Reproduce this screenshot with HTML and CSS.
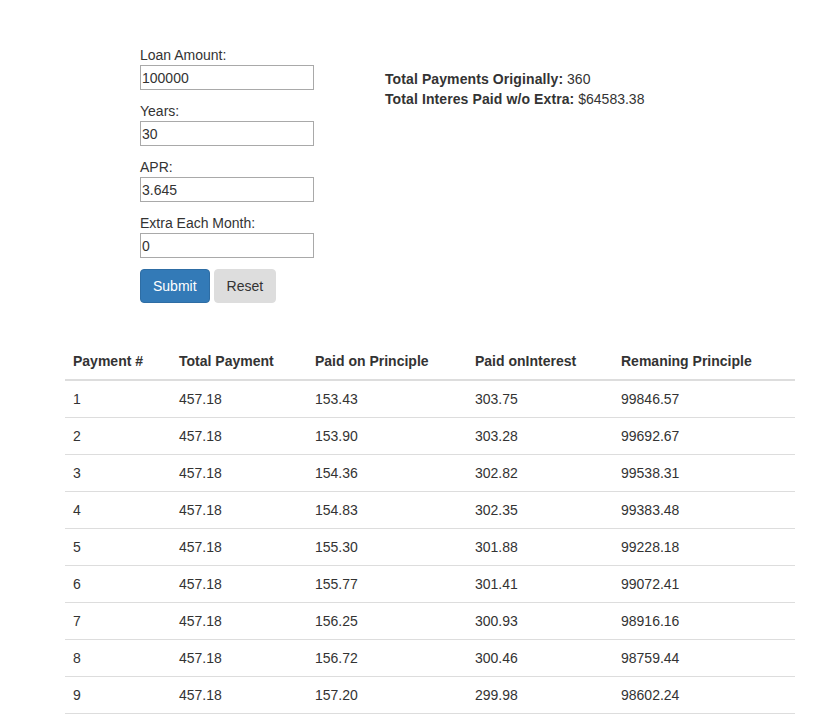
FILE: index.html
```html
<!DOCTYPE html>
<html>
<head>
<meta charset="utf-8">
<title>Mortgage Calculator</title>
<link rel="stylesheet" href="styles.css">
</head>
<body>
<div class="top">
  <form class="loan-form">
    <div class="group">
      <label class="lbl">Loan Amount:</label>
      <input class="field" type="text" value="100000">
    </div>
    <div class="group">
      <label class="lbl">Years:</label>
      <input class="field" type="text" value="30">
    </div>
    <div class="group">
      <label class="lbl">APR:</label>
      <input class="field" type="text" value="3.645">
    </div>
    <div class="group">
      <label class="lbl">Extra Each Month:</label>
      <input class="field" type="text" value="0">
    </div>
    <div class="actions">
      <button type="button" class="btn btn-primary">Submit</button>
      <button type="button" class="btn btn-default">Reset</button>
    </div>
  </form>
  <div class="summary">
    <div><strong>Total Payments Originally:</strong> 360</div>
    <div><strong>Total Interes Paid w/o Extra:</strong> $64583.38</div>
  </div>
</div>
<table class="sched">
  <colgroup>
    <col class="c1"><col class="c2"><col class="c3"><col class="c4"><col class="c5">
  </colgroup>
  <thead>
    <tr><th>Payment #</th><th>Total Payment</th><th>Paid on Principle</th><th>Paid onInterest</th><th>Remaning Principle</th></tr>
  </thead>
  <tbody>
    <tr><td>1</td><td>457.18</td><td>153.43</td><td>303.75</td><td>99846.57</td></tr>
    <tr><td>2</td><td>457.18</td><td>153.90</td><td>303.28</td><td>99692.67</td></tr>
    <tr><td>3</td><td>457.18</td><td>154.36</td><td>302.82</td><td>99538.31</td></tr>
    <tr><td>4</td><td>457.18</td><td>154.83</td><td>302.35</td><td>99383.48</td></tr>
    <tr><td>5</td><td>457.18</td><td>155.30</td><td>301.88</td><td>99228.18</td></tr>
    <tr><td>6</td><td>457.18</td><td>155.77</td><td>301.41</td><td>99072.41</td></tr>
    <tr><td>7</td><td>457.18</td><td>156.25</td><td>300.93</td><td>98916.16</td></tr>
    <tr><td>8</td><td>457.18</td><td>156.72</td><td>300.46</td><td>98759.44</td></tr>
    <tr class="last"><td>9</td><td>457.18</td><td>157.20</td><td>299.98</td><td>98602.24</td></tr>
  </tbody>
</table>
</body>
</html>
```
FILE: styles.css
```css
html, body {
  margin: 0;
  padding: 0;
  background: #fff;
}
body {
  font-family: "Liberation Sans", Arial, sans-serif;
  font-size: 14px;
  line-height: 20px;
  color: #333;
}
.top {
  display: flex;
  padding: 45px 0 0 140px;
}
.loan-form {
  width: 174px;
  display: flex;
  flex-direction: column;
  margin: 0;
}
.group {
  display: flex;
  flex-direction: column;
  margin-bottom: 11px;
}
.lbl {
  display: block;
  height: 20px;
  line-height: 20px;
  font-weight: normal;
}
.field {
  box-sizing: border-box;
  width: 174px;
  height: 25px;
  margin: 0;
  padding: 1px 1px;
  border: 1px solid #a9a9a9;
  border-radius: 0;
  font-family: "Liberation Sans", Arial, sans-serif;
  font-size: 14px;
  color: #333;
  background: #fff;
}
.actions {
  display: flex;
  gap: 4px;
}
.btn {
  box-sizing: border-box;
  height: 34px;
  padding: 6px 12px;
  font-family: "Liberation Sans", Arial, sans-serif;
  font-size: 14px;
  line-height: 20px;
  border-radius: 4px;
  border: 1px solid transparent;
  cursor: pointer;
}
.btn-primary {
  background: #337ab7;
  border-color: #2e6da4;
  color: #fff;
}
.btn-default {
  background: #dddddd;
  border-color: #dddddd;
  color: #333;
}
.summary {
  margin: 24px 0 0 71px;
}
.summary strong {
  font-weight: bold;
  letter-spacing: 0.1px;
}
.sched {
  margin: 40px 0 0 65px;
  width: 730px;
  border-collapse: collapse;
  border-spacing: 0;
  table-layout: fixed;
}
.c1 { width: 106px; }
.c2 { width: 136px; }
.c3 { width: 160px; }
.c4 { width: 146px; }
.c5 { width: 182px; }
.sched th {
  text-align: left;
  font-weight: bold;
  padding: 8px;
  line-height: 20px;
  border-bottom: 2px solid #ddd;
}
.sched td {
  padding: 8px;
  line-height: 20px;
  border-top: 1px solid #ddd;
}
.sched tr.last td {
  border-bottom: 1px solid #ddd;
}
```
